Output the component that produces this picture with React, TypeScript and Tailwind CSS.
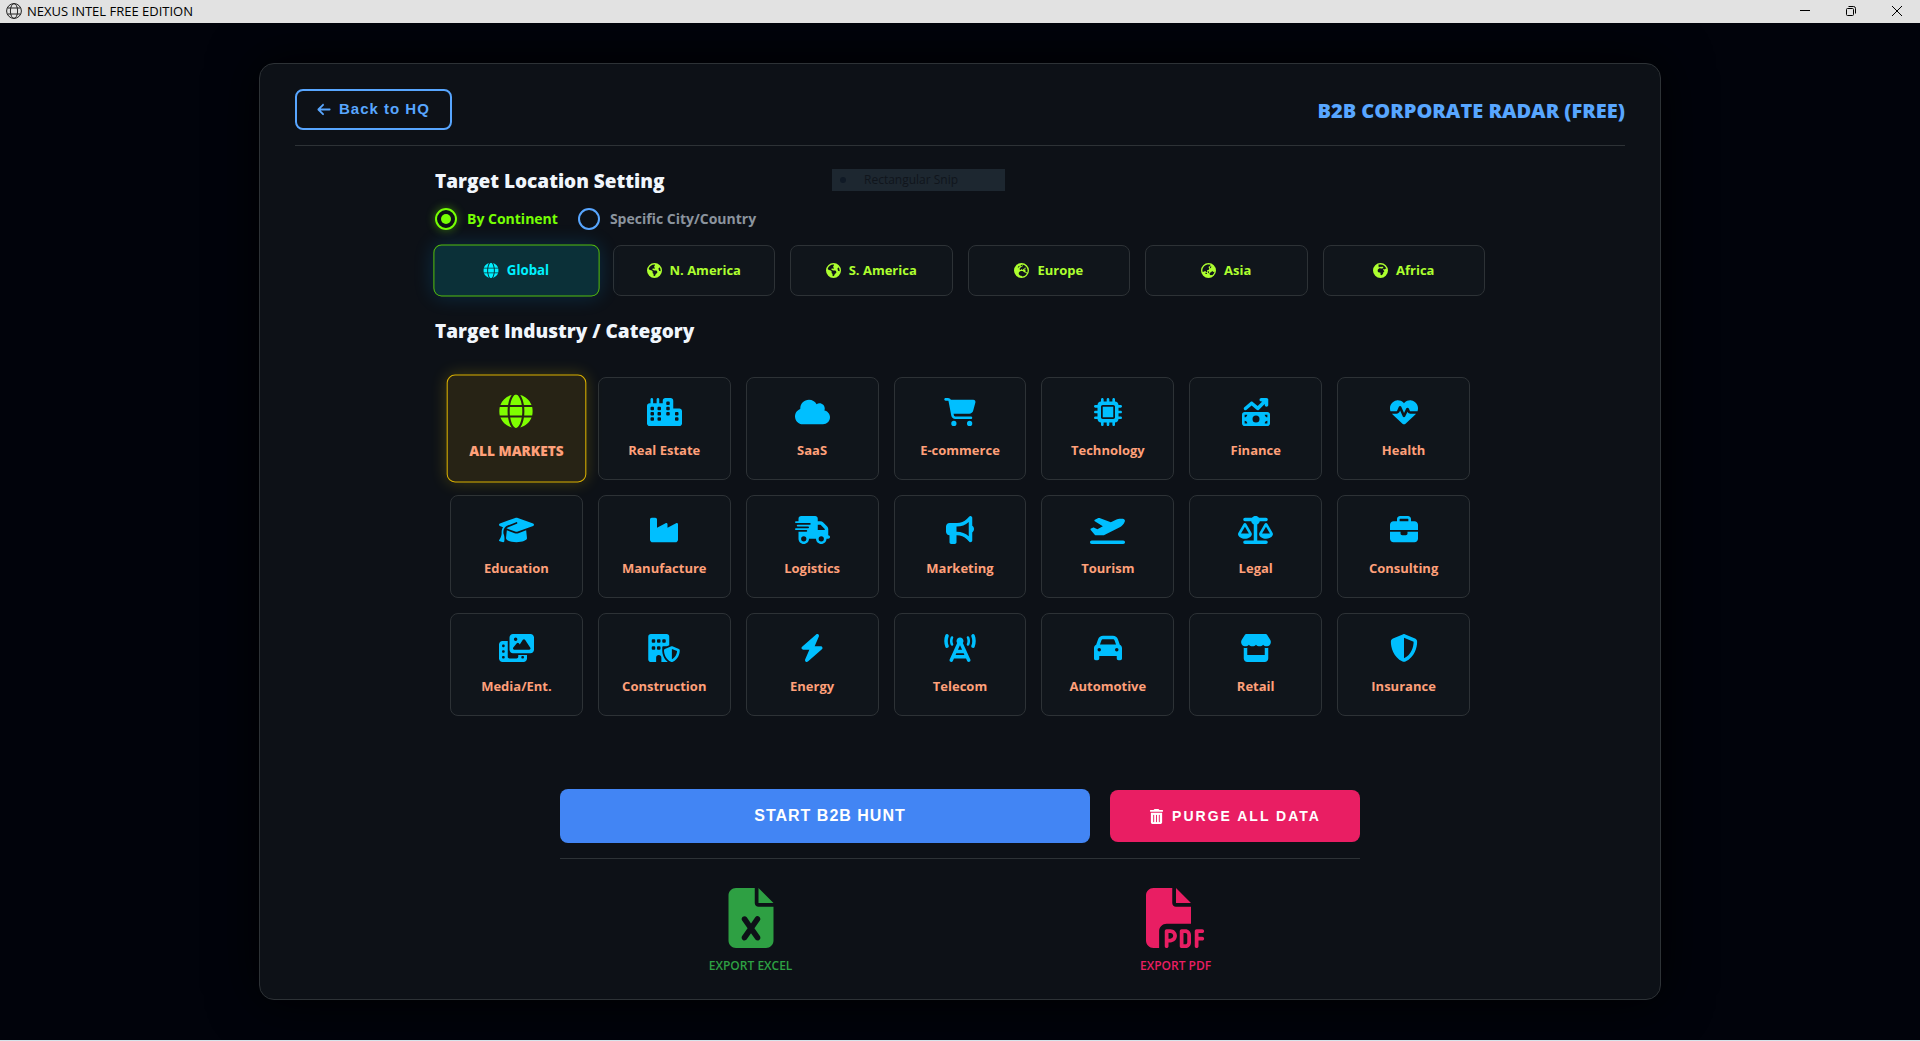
import { useState } from "react";
import {
  FaArrowLeft,
  FaBolt,
  FaBriefcase,
  FaBuildingShield,
  FaBullhorn,
  FaCar,
  FaCartShopping,
  FaCity,
  FaCloud,
  FaEarthAfrica,
  FaEarthAmericas,
  FaEarthAsia,
  FaEarthEurope,
  FaFileExcel,
  FaFilePdf,
  FaGlobe,
  FaGraduationCap,
  FaHeartPulse,
  FaIndustry,
  FaMicrochip,
  FaMoneyBillTrendUp,
  FaPhotoFilm,
  FaPlaneDeparture,
  FaScaleBalanced,
  FaShieldHalved,
  FaStore,
  FaTowerCell,
  FaTrashCan,
  FaTruckFast,
} from "react-icons/fa6";

const continents = [
  { name: "Global", icon: FaGlobe },
  { name: "N. America", icon: FaEarthAmericas },
  { name: "S. America", icon: FaEarthAmericas },
  { name: "Europe", icon: FaEarthEurope },
  { name: "Asia", icon: FaEarthAsia },
  { name: "Africa", icon: FaEarthAfrica },
];

// Some icons are wider than they are tall, so each one carries its own size
const square = "size-7";
const wide = "h-7 w-8";
const wider = "h-7 w-[35px]";

const industries = [
  { name: "ALL MARKETS", icon: FaGlobe, size: "size-8" },
  { name: "Real Estate", icon: FaCity, size: wider },
  { name: "SaaS", icon: FaCloud, size: wider },
  { name: "E-commerce", icon: FaCartShopping, size: wide },
  { name: "Technology", icon: FaMicrochip, size: square },
  { name: "Finance", icon: FaMoneyBillTrendUp, size: square },
  { name: "Health", icon: FaHeartPulse, size: square },
  { name: "Education", icon: FaGraduationCap, size: wider },
  { name: "Manufacture", icon: FaIndustry, size: wide },
  { name: "Logistics", icon: FaTruckFast, size: wider },
  { name: "Marketing", icon: FaBullhorn, size: square },
  { name: "Tourism", icon: FaPlaneDeparture, size: wider },
  { name: "Legal", icon: FaScaleBalanced, size: wider },
  { name: "Consulting", icon: FaBriefcase, size: square },
  { name: "Media/Ent.", icon: FaPhotoFilm, size: wider },
  { name: "Construction", icon: FaBuildingShield, size: wide },
  { name: "Energy", icon: FaBolt, size: square },
  { name: "Telecom", icon: FaTowerCell, size: wide },
  { name: "Automotive", icon: FaCar, size: square },
  { name: "Retail", icon: FaStore, size: wide },
  { name: "Insurance", icon: FaShieldHalved, size: square },
];

const modes = [
  { id: "continent", label: "By Continent" },
  { id: "city", label: "Specific City/Country" },
];

function TitleBar() {
  return (
    <header className="flex h-[23px] items-center justify-between bg-[#e2e2e2] pr-[18px] pb-0.5 pl-1.5 text-black">
      <div className="flex items-center gap-[5px]">
        <svg width="16" height="16" viewBox="0 0 16 16" fill="none" stroke="#222" strokeWidth="1">
          <circle cx="8" cy="8" r="7.4" />
          <ellipse cx="8" cy="8" rx="3.6" ry="7.4" />
          <path d="M1.5 5h13M1.5 11h13" />
        </svg>
        <span className="text-[13px] leading-5">NEXUS INTEL FREE EDITION</span>
      </div>
      <div className="flex items-center gap-9">
        <button aria-label="Minimize">
          <svg className="block" width="10" height="10" viewBox="0 0 10 10" stroke="currentColor">
            <path d="M0 4.5h10" />
          </svg>
        </button>
        <button aria-label="Restore">
          <svg className="block" width="10" height="10" viewBox="0 0 10 10" fill="none" stroke="currentColor">
            <rect x="0.5" y="2.5" width="7" height="7" rx="1" />
            <path d="M2.5 0.5h5a2 2 0 0 1 2 2v5" />
          </svg>
        </button>
        <button aria-label="Close">
          <svg className="block" width="10" height="10" viewBox="0 0 10 10" stroke="currentColor">
            <path d="M0 0l10 10M10 0L0 10" />
          </svg>
        </button>
      </div>
    </header>
  );
}

export default function App() {
  const [mode, setMode] = useState("continent");
  const [continent, setContinent] = useState("Global");
  const [industry, setIndustry] = useState("ALL MARKETS");

  return (
    <div className="flex min-h-screen flex-col border-b border-[#d5e3ea] bg-[#01030b] font-['Open_Sans','Noto_Sans',sans-serif]">
      <TitleBar />

      <main className="flex flex-1 justify-center overflow-hidden px-5 py-10">
        <div className="relative w-full max-w-[1402px] rounded-[15px] border border-[#2d3236] bg-[#0d1117] px-[35px] pt-[25px] shadow-[0_0_50px_#000]">
          <div className="flex items-center justify-between border-b border-[#2d3236] pb-[15px]">
            <button className="flex h-[41px] items-center gap-2 rounded-lg border-2 border-[#58a6ff] px-5 font-['Liberation_Sans',sans-serif] text-[15px] font-bold tracking-[1px] text-[#58a6ff]">
              <FaArrowLeft className="w-3.5" />
              Back to HQ
            </button>
            <h1 className="pt-0.5 text-xl font-extrabold text-[#58a6ff]">B2B CORPORATE RADAR (FREE)</h1>
          </div>

          {/* Leftover tooltip */}
          <div className="absolute left-[572px] top-[105px] flex h-[22px] w-[173px] items-center gap-[18px] bg-[#1d2730] pl-2 text-xs text-[#10151c]">
            <span className="size-1.5 rounded-full bg-[#101a26]" />
            Rectangular Snip
          </div>

          <div className="mx-auto max-w-[1050px]">
            <h2 className="mt-[22px] text-[19px] leading-[26px] font-extrabold text-[#f0f6fc]">Target Location Setting</h2>

            <div className="mt-3.5 flex gap-5">
              {modes.map((m) => (
                <label
                  key={m.id}
                  className={`flex items-center gap-2.5 text-sm leading-[22px] font-bold ${
                    mode === m.id ? "text-[#76ff03]" : "text-[#8b949e]"
                  }`}
                >
                  <input
                    type="radio"
                    name="mode"
                    checked={mode === m.id}
                    onChange={() => setMode(m.id)}
                    className="grid size-[22px] appearance-none place-content-center rounded-full border-2 border-[#58a6ff] before:size-2.5 before:rounded-full checked:border-[#76ff03] checked:shadow-[0_0_10px_#76ff0366] checked:before:bg-[#76ff03]"
                  />
                  {m.label}
                </label>
              ))}
            </div>

            <div className="mt-[15px] grid grid-cols-6 gap-[15px]">
              {continents.map(({ name, icon: Icon }) => (
                <button
                  key={name}
                  onClick={() => setContinent(name)}
                  className={`flex h-[51px] items-center justify-center gap-2 rounded-lg border text-[13px] font-bold ${
                    continent === name
                      ? "scale-102 border-[#55bd0c] bg-[#0b3038] text-[#00f0ff] shadow-[0_0_20px_#00a0ff33]"
                      : "border-[#2d3236] bg-[#10151b] text-[#adff2f]"
                  }`}
                >
                  <Icon className="size-[15px]" />
                  {name}
                </button>
              ))}
            </div>

            <h2 className="mt-[22px] text-[19px] leading-[26px] font-extrabold text-[#f0f6fc]">Target Industry / Category</h2>

            <div className="mt-[33px] grid grid-cols-7 gap-[15px] px-[15px]">
              {industries.map(({ name, icon: Icon, size }) => (
                <button
                  key={name}
                  onClick={() => setIndustry(name)}
                  className={`flex h-[103px] flex-col items-center rounded-lg border pt-5 text-[13px] leading-[18px] text-[#ffa07a] ${
                    industry === name
                      ? "scale-105 border-[#d9b000] bg-[#272315] font-extrabold shadow-[0_0_15px_#ffd70033]"
                      : "border-[#2d3236] bg-[#10151b] font-bold"
                  }`}
                >
                  <span className={`flex h-7 items-center ${industry === name ? "text-[#7fff00]" : "text-[#00bfff]"}`}>
                    <Icon className={size} />
                  </span>
                  <span className="mt-[15px]">{name}</span>
                </button>
              ))}
            </div>
          </div>

          <div className="mx-auto mt-[73px] max-w-[800px] font-['Liberation_Sans',sans-serif]">
            <div className="flex items-center gap-5 border-b border-[#2d3236] pb-[15px] font-bold text-white">
              <button className="h-[54px] flex-1 rounded-lg bg-[#4285f4] pl-2.5 tracking-[1px]">START B2B HUNT</button>
              <button className="flex h-[52px] w-[250px] items-center justify-center gap-2 rounded-lg bg-[#e91e63] text-sm tracking-[2px]">
                <FaTrashCan className="size-[15px]" />
                PURGE ALL DATA
              </button>
            </div>
          </div>

          <div className="mx-auto mt-[29px] flex max-w-[800px] justify-around gap-[50px] pb-[22px] text-xs leading-[18px] font-semibold">
            <button className="flex flex-col items-center gap-[9px] text-[#2ea043]">
              <FaFileExcel className="size-[60px]" />
              EXPORT EXCEL
            </button>
            <button className="flex flex-col items-center gap-[9px] text-[#e91e63]">
              <FaFilePdf className="size-[60px]" />
              EXPORT PDF
            </button>
          </div>
        </div>
      </main>
    </div>
  );
}
